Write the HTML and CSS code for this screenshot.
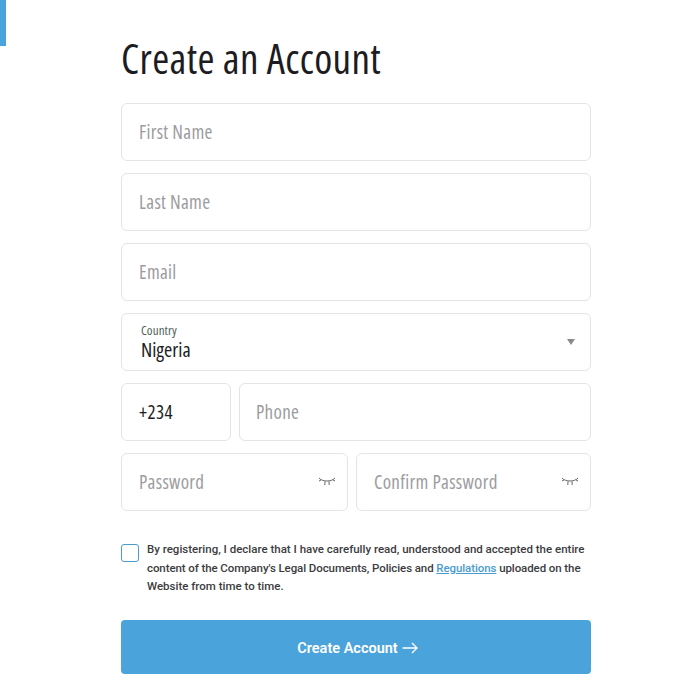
FILE: index.html
```html
<!DOCTYPE html>
<html lang="en">
<head>
<meta charset="utf-8">
<title>Create an Account</title>
<link rel="stylesheet" href="styles.css">
</head>
<body>
<div class="corner-bar"></div>
<main class="page">
  <h1 class="title">Create an Account</h1>
  <form class="form">
    <div class="field"><span class="placeholder">First Name</span></div>
    <div class="field"><span class="placeholder">Last Name</span></div>
    <div class="field"><span class="placeholder">Email</span></div>
    <div class="field field-select">
      <div class="select-text">
        <span class="select-label">Country</span>
        <span class="select-value">Nigeria</span>
      </div>
      <span class="caret"></span>
    </div>
    <div class="row">
      <div class="field field-code"><span class="value">+234</span></div>
      <div class="field field-grow"><span class="placeholder">Phone</span></div>
    </div>
    <div class="row">
      <div class="field field-half">
        <span class="placeholder">Password</span>
        <svg class="eye" viewBox="0 0 18 10" width="18" height="10"><path d="M1 1 C4.5 5 13.5 5 17 1 M3 3 L1 4 M15 3 L17 4 M7 4.3 L6.8 8 M11 4.3 L11.2 8" /></svg>
      </div>
      <div class="field field-half">
        <span class="placeholder">Confirm Password</span>
        <svg class="eye" viewBox="0 0 18 10" width="18" height="10"><path d="M1 1 C4.5 5 13.5 5 17 1 M3 3 L1 4 M15 3 L17 4 M7 4.3 L6.8 8 M11 4.3 L11.2 8" /></svg>
      </div>
    </div>
    <div class="consent">
      <span class="checkbox"></span>
      <p class="consent-text">By registering, I declare that I have carefully read, understood and accepted the entire<br><span class="tight">content of the Company's Legal Documents, Policies and <a href="#">Regulations</a> uploaded on the</span><br>Website from time to time.</p>
    </div>
    <button class="submit" type="button">Create Account
      <svg class="arrow" viewBox="0 0 16 12" width="16" height="12"><path d="M0.5 6 H15 M10 1 L15 6 L10 11" /></svg>
    </button>
  </form>
</main>
</body>
</html>
```

FILE: styles.css
```css
* { box-sizing: border-box; }
html, body { margin: 0; padding: 0; background: #fff; }
body { font-family: "Open Sans", "Liberation Sans", sans-serif; font-stretch: 75%; color: #1c1c22; }
.corner-bar { position: absolute; left: 0; top: 0; width: 6px; height: 46px; background: #4aa3da; }
.page { width: 470px; margin-left: 121px; padding-top: 35px; }
.title { margin: 0 0 21px; font-size: 41px; line-height: 47px; font-weight: 400; letter-spacing: 0.37px; }
.form { display: flex; flex-direction: column; gap: 12px; }
.field { height: 58px; border: 1px solid #e4e4e6; border-radius: 6px; padding: 0 17px; display: flex; align-items: center; background: #fff; }
.placeholder { font-size: 19px; color: #9c9ca0; letter-spacing: 0.3px; }
.value { font-size: 19px; color: #1c1c22; letter-spacing: 0.4px; }
.field-select { justify-content: space-between; padding: 0 15px 0 19px; }
.select-text { display: flex; flex-direction: column; }
.select-label { font-size: 13px; line-height: 15px; color: #4f5f58; letter-spacing: 0.1px; }
.select-value { font-size: 20px; line-height: 24px; color: #1c1c22; }
.caret { width: 0; height: 0; border-left: 4.5px solid transparent; border-right: 4.5px solid transparent; border-top: 6px solid #8a8a8e; margin-top: -1px; }
.row { display: flex; gap: 8px; }
.field-code { width: 110px; flex: none; }
.field-grow { flex: 1; padding-left: 16px; }
.field-half { flex: 1; justify-content: space-between; padding-right: 11px; }
.field-half:first-child { flex: none; width: 227px; }
.eye { fill: none; stroke: #55555a; stroke-width: 0.9; }
.consent { display: flex; align-items: flex-start; gap: 8px; margin-top: 17px; height: 60px; }
.checkbox { flex: none; width: 18px; height: 18px; margin-top: 4px; border: 1px solid #4a9bd0; border-radius: 3px; }
.consent-text { margin: 0; font-family: Roboto, sans-serif; font-stretch: 100%; font-size: 11.5px; line-height: 18.5px; color: #3c3c41; font-weight: 500; white-space: nowrap; }
.tight { letter-spacing: -0.09px; }
.consent-text a { color: #4a9bd0; }
.submit { height: 54px; margin-top: 8px; padding: 2px 0 0 3px; border: 0; border-radius: 4px; background: #4aa3da; color: #fff; font-family: Roboto, sans-serif; font-stretch: 100%; font-size: 14.5px; font-weight: 600; display: flex; align-items: center; justify-content: center; gap: 4px; }
.arrow { fill: none; stroke: #fff; stroke-width: 1.4; }
```
